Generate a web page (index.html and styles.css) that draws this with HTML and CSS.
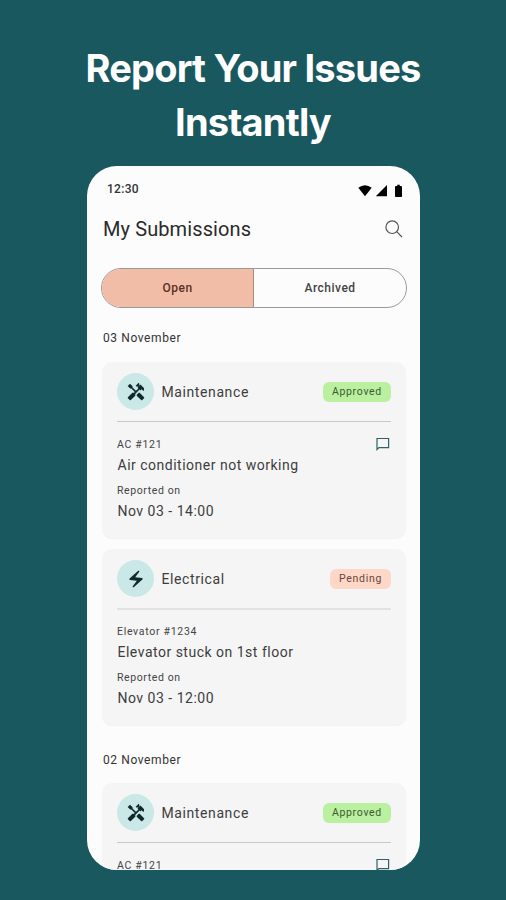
FILE: index.html
```html
<!DOCTYPE html>
<html lang="en">
<head>
<meta charset="utf-8">
<title>My Submissions</title>
<link rel="stylesheet" href="styles.css">
</head>
<body>
<svg class="defs" width="0" height="0" aria-hidden="true">
  <symbol id="tools" viewBox="0 0 24 24"><path d="M21.67 18.17l-5.3-5.3h-.99l-2.54 2.54v.99l5.3 5.3c.39.39 1.02.39 1.41 0l2.12-2.12c.39-.39.39-1.02 0-1.41z"/><path d="M17.34 10.19l1.41-1.41 2.12 2.12c1.17-1.17 1.17-3.07 0-4.24l-3.54-3.54-1.41 1.41V1.71L15.22 1l-3.54 3.54.71.71h2.83l-1.41 1.41 1.06 1.06-2.89 2.89-4.13-4.13V5.06L4.83 2.04 2 4.87 5.03 7.9h1.41l4.13 4.13-.85.85H7.6l-5.3 5.3c-.39.39-.39 1.02 0 1.41l2.12 2.12c.39.39 1.02.39 1.41 0l5.3-5.3v-2.12l5.15-5.15z"/></symbol>
  <symbol id="bolt" viewBox="0 0 24 24"><path d="M14.69 2.21L4.33 11.49c-.64.58-.28 1.65.58 1.73L13 14l-4.85 6.76c-.22.31-.19.74.08 1.01.3.3.77.31 1.08.02l10.36-9.28c.64-.58.28-1.65-.58-1.73L11 10l4.85-6.76c.22-.31.19-.74-.08-1.01-.3-.3-.77-.31-1.08-.02z"/></symbol>
  <symbol id="chat" viewBox="0 0 14 14"><path d="M1 12.600V1.500h11.600v9.200H2.900z" fill="none" stroke="currentColor" stroke-width="1.200"/></symbol>
</svg>
<h1 class="headline">Report Your Issues<br>Instantly</h1>
<main class="phone">
  <div class="status">
    <span class="clock">12:30</span>
    <svg class="indicators" width="46" height="14" viewBox="0 0 46 14"><path d="M.3 3.800Q7-1.400 13.700 3.800L7 12.200z"/><path d="M29 1v11.200H17.800z"/><path d="M37 12.200V3q0-1 1-1h1.200V.8h2.600V2H43q1 0 1 1v9.200q0 .8-.8.8h-5.400q-.8 0-.8-.8z"/></svg>
  </div>
  <header class="bar">
    <h2 class="title">My Submissions</h2>
    <svg class="search" width="18" height="18" viewBox="0 0 18 18"><circle cx="7.200" cy="7.200" r="6.300"/><path d="M11.700 11.700l5.300 5.300"/></svg>
  </header>
  <nav class="tabs"><span class="tab active">Open</span><span class="tab">Archived</span></nav>
  <h3 class="date">03 November</h3>
  <article class="card">
    <div class="head"><span class="disc"><svg class="glyph"><use href="#tools"/></svg></span><span class="kind">Maintenance</span><span class="badge approved">Approved</span></div>
    <div class="meta"><span class="label unit">AC #121</span><svg class="chat"><use href="#chat"/></svg></div>
    <p class="value issue">Air conditioner not working</p>
    <p class="label rep">Reported on</p>
    <p class="value when">Nov 03 - 14:00</p>
  </article>
  <article class="card">
    <div class="head soft"><span class="disc"><svg class="glyph"><use href="#bolt"/></svg></span><span class="kind">Electrical</span><span class="badge pending">Pending</span></div>
    <div class="meta"><span class="label unit">Elevator #1234</span></div>
    <p class="value issue">Elevator stuck on 1st floor</p>
    <p class="label rep">Reported on</p>
    <p class="value when">Nov 03 - 12:00</p>
  </article>
  <h3 class="date later">02 November</h3>
  <article class="card">
    <div class="head"><span class="disc"><svg class="glyph"><use href="#tools"/></svg></span><span class="kind">Maintenance</span><span class="badge approved">Approved</span></div>
    <div class="meta"><span class="label unit">AC #121</span><svg class="chat"><use href="#chat"/></svg></div>
  </article>
</main>
</body>
</html>
```
FILE: styles.css
```css
* { box-sizing: border-box; }
body { margin: 0; height: 900px; overflow: hidden; background: #1a585f; font-family: Roboto, sans-serif; color: #3d3d3d; padding-top: 41px; }
.defs { display: block; height: 0; }
h1, h2, h3, p { margin: 0; font-weight: 400; }
.headline { font: 700 38px/54px Inter, sans-serif; color: #fff; text-align: center; letter-spacing: -0.8px; }
.phone { width: 333px; height: 704px; margin: 17px 0 0 87px; padding: 0 14px 0 15px; background: #fcfcfc; border-radius: 30px; overflow: hidden; }
.status { display: flex; justify-content: space-between; height: 42px; padding: 16px 2px 0 5px; }
.clock { font-size: 12px; line-height: 14px; font-weight: 500; letter-spacing: .3px; color: #333; }
.indicators { margin-top: 2px; fill: #000; }
.bar { display: flex; justify-content: space-between; align-items: center; height: 42px; padding: 0 3px 0 1px; }
.title { font-size: 20px; line-height: 24px; color: #2a2a2a; letter-spacing: .1px; }
.search { fill: none; stroke: #555; stroke-width: 1.2; }
.tabs { display: grid; grid-template-columns: 1fr 1fr; height: 40px; margin-top: 18px; border: 1px solid #999; border-radius: 20px; overflow: hidden; margin-left: -1px; width: 306px; }
.tab { display: flex; align-items: center; justify-content: center; font-size: 12px; font-weight: 500; letter-spacing: .5px; color: #444; }
.active { background: #f2bda6; border-right: 1px solid #ad8a7a; color: #5b3028; }
.date { font-size: 12px; line-height: 16px; letter-spacing: .6px; margin: 22px 0 16px 1px; color: #333; }
.later { margin: 27px 0 15px 1px; }
.card { height: 176px; padding: 0 15px; background: #f5f5f5; border-radius: 10px; box-shadow: 0 1px 1px #0000000c; }
.card + .card { margin-top: 11px; }
.head { display: flex; align-items: center; height: 60px; border-bottom: 1px solid #c8c8c8; }
.soft { border-bottom: 2px solid #e2e2e2; height: 61px; }
.disc { width: 37px; height: 37px; border-radius: 50%; background: #c9e8e7; display: grid; place-items: center; margin-right: 7.5px; }
.glyph { width: 20px; height: 20px; fill: #10292d; }
.kind { font-size: 14px; letter-spacing: .6px; }
.badge { margin-left: auto; height: 20px; line-height: 20px; border-radius: 6px; padding: 0 9px; font-size: 10.5px; letter-spacing: .7px; }
.approved { background: #baf09f; color: #3c5b32; }
.pending { background: #fed7c8; color: #6b453b; }
.meta { display: flex; justify-content: space-between; height: 14px; margin-top: 16px; }
.soft + .meta { margin-top: 15px; }
.label { font-size: 10.5px; line-height: 14px; letter-spacing: .6px; color: #444; }
.unit { letter-spacing: .7px; }
.chat { width: 14px; height: 14px; margin: -1px 1px 0 0; color: #2e6269; }
.value { font-size: 14px; line-height: 18px; letter-spacing: .5px; padding-left: .5px; }
.issue { margin-top: 4px; }
.rep { margin-top: 10px; }
.when { margin-top: 4px; }
```
